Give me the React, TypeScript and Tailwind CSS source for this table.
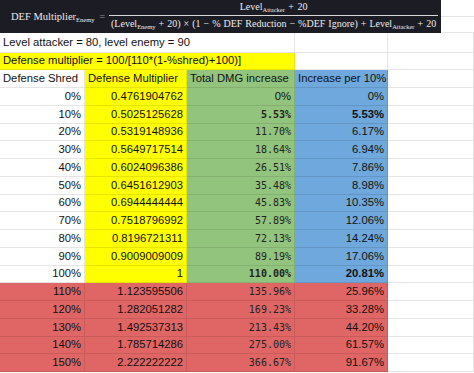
import React from 'react';

type Row = {
  shred: string;
  mult: string;
  total: string;
  per: string;
  bold?: boolean;
  red?: boolean;
  sansTotal?: boolean;
};

const rows: Row[] = [
  { shred: '0%', mult: '0.4761904762', total: '0%', per: '0%', sansTotal: true },
  { shred: '10%', mult: '0.5025125628', total: '5.53%', per: '5.53%', bold: true },
  { shred: '20%', mult: '0.5319148936', total: '11.70%', per: '6.17%' },
  { shred: '30%', mult: '0.5649717514', total: '18.64%', per: '6.94%' },
  { shred: '40%', mult: '0.6024096386', total: '26.51%', per: '7.86%' },
  { shred: '50%', mult: '0.6451612903', total: '35.48%', per: '8.98%' },
  { shred: '60%', mult: '0.6944444444', total: '45.83%', per: '10.35%' },
  { shred: '70%', mult: '0.7518796992', total: '57.89%', per: '12.06%' },
  { shred: '80%', mult: '0.8196721311', total: '72.13%', per: '14.24%' },
  { shred: '90%', mult: '0.9009009009', total: '89.19%', per: '17.06%' },
  { shred: '100%', mult: '1', total: '110.00%', per: '20.81%', bold: true },
  { shred: '110%', mult: '1.123595506', total: '135.96%', per: '25.96%', red: true },
  { shred: '120%', mult: '1.282051282', total: '169.23%', per: '33.28%', red: true },
  { shred: '130%', mult: '1.492537313', total: '213.43%', per: '44.20%', red: true },
  { shred: '140%', mult: '1.785714286', total: '275.00%', per: '61.57%', red: true },
  { shred: '150%', mult: '2.222222222', total: '366.67%', per: '91.67%', red: true },
];

const grid = 'grid grid-cols-[85px_102px_108px_93px_1fr] h-[17.75px]';
const cell = 'border-r border-b border-black/10 flex items-center px-[3px] overflow-hidden whitespace-nowrap';
const mono = "font-['DejaVu_Sans_Mono',monospace] text-[10px] text-[#222]";

const Sub = ({ children }: { children: React.ReactNode }) => (
  <span className="text-[6.5px] relative top-[2px]">{children}</span>
);

function Formula() {
  return (
    <div className="w-[441px] h-[33px] bg-[#1c1c25] text-[#ececec] flex items-center font-['Liberation_Serif',serif] text-[10px] whitespace-nowrap">
      <div className="pl-[11px] text-[10.5px]">
        DEF Multiplier<Sub>Enemy</Sub>
      </div>
      <span className="pl-[5px] pr-[4px] text-[#9a9aa0]">=</span>
      <div className="w-[329px] flex flex-col items-center">
        <div className="leading-[13px] [word-spacing:1px]">
          Level<Sub>Attacker</Sub> + 20
        </div>
        <div className="h-px w-full bg-[#d8d8d8] my-[1px]" />
        <div className="leading-[14px] pb-[1px] [word-spacing:0.5px]">
          (Level<Sub>Enemy</Sub> + 20) × (1 − % DEF Reduction − %DEF Ignore) + Level<Sub>Attacker</Sub> + 20
        </div>
      </div>
    </div>
  );
}

export default function App() {
  return (
    <div className="w-[474px] h-[373px] overflow-hidden bg-white text-[#111] font-['Liberation_Sans',Arial,sans-serif] text-[11.25px]">
      <div className="flex h-[33px]">
        <Formula />
        <div className="flex-1 flex flex-col">
          <div className="h-[17px] border-b border-black/10" />
          <div className="flex-1 border-b border-black/10" />
        </div>
      </div>

      <div className="grid grid-cols-[85px_102px_108px_93px_1fr] h-[19.5px]">
        <div className={`${cell} col-span-3 overflow-visible`}>Level attacker = 80, level enemy = 90</div>
        <div className={cell} />
        <div className={cell} />
      </div>

      <div className={grid}>
        <div className={`${cell} col-span-3 bg-[#ffff00]`}>Defense multiplier = 100/[110*(1-%shred)+100)]</div>
        <div className={cell} />
        <div className={cell} />
      </div>

      <div className={grid}>
        <div className={cell}>Defense Shred</div>
        <div className={`${cell} bg-[#ffff00]`}>Defense Multiplier</div>
        <div className={`${cell} bg-[#93c47d]`}>Total DMG increase</div>
        <div className={`${cell} bg-[#6fa8dc]`}>Increase per 10%</div>
        <div className={cell} />
      </div>

      {rows.map((r) => (
        <div key={r.shred} className={grid}>
          <div className={`${cell} justify-end ${r.red ? 'bg-[#e06666]' : ''}`}>{r.shred}</div>
          <div className={`${cell} justify-end ${r.red ? 'bg-[#e06666]' : 'bg-[#ffff00]'}`}>{r.mult}</div>
          <div
            className={`${cell} justify-end ${r.red ? 'bg-[#e06666]' : 'bg-[#93c47d]'} ${r.sansTotal ? '' : mono} ${r.bold ? 'font-bold' : ''}`}
          >
            {r.total}
          </div>
          <div className={`${cell} justify-end ${r.red ? 'bg-[#e06666]' : 'bg-[#6fa8dc]'} ${r.bold ? 'font-bold' : ''}`}>
            {r.per}
          </div>
          <div className={cell} />
        </div>
      ))}
    </div>
  );
}
